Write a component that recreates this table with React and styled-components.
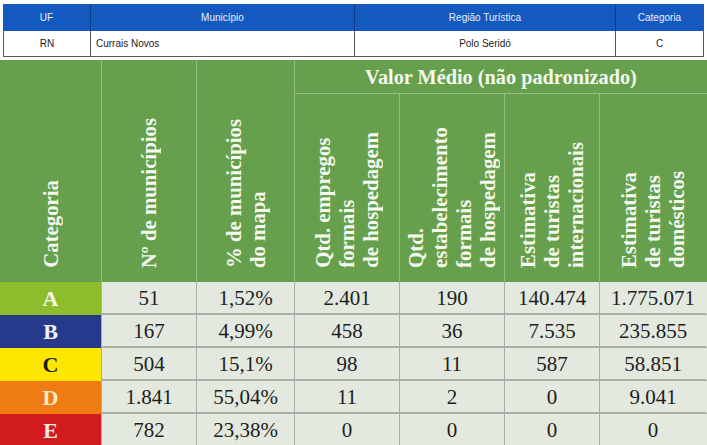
import React from "react";
import styled, { createGlobalStyle } from "styled-components";

const Global = createGlobalStyle`
  html, body { margin: 0; padding: 0; background: #ffffff; }
  body { width: 707px; height: 445px; overflow: hidden; }
`;

const Page = styled.div`
  width: 707px;
  display: flex;
  flex-direction: column;
`;

const InfoTable = styled.div`
  margin: 4px 3px 0 3px;
  display: grid;
  grid-template-columns: 88px 264px 261px 88px;
  grid-template-rows: 27px 26px;
  font-family: "Liberation Sans", Arial, sans-serif;
  font-size: 10px;
`;

const InfoHead = styled.div`
  background: #1459bf;
  color: #e8f0ff;
  display: flex;
  align-items: center;
  justify-content: center;
  border-right: 1px solid ${(p) => (p.$last ? "#1459bf" : "#0c3d85")};
  box-sizing: border-box;
`;

const InfoCell = styled.div`
  background: #ffffff;
  color: #1d1d1d;
  display: flex;
  align-items: center;
  justify-content: ${(p) => (p.$left ? "flex-start" : "center")};
  padding-left: ${(p) => (p.$left ? "5px" : "0")};
  border-bottom: 1px solid #5a5a5a;
  border-right: 1px solid #5a5a5a;
  border-left: ${(p) => (p.$first ? "1px solid #5a5a5a" : "none")};
  box-sizing: border-box;
`;

const DataTable = styled.div`
  margin-top: 3px;
  display: grid;
  grid-template-columns: 102px 95px 98px 105px 105px 95px 107px;
  grid-template-rows: 34px 188px repeat(5, 33px);
  font-family: "Liberation Serif", "Times New Roman", serif;
`;

const GREEN = "#66a04c";
const HLINE = "#93bd83";

const SideHead = styled.div`
  grid-row: 1 / span 2;
  background: ${GREEN};
  border-right: 1px solid ${(p) => (p.$last ? GREEN : HLINE)};
  box-sizing: border-box;
  display: flex;
  align-items: flex-end;
  justify-content: center;
  padding-bottom: 14px;
`;

const GroupHead = styled.div`
  grid-column: 4 / span 4;
  background: ${GREEN};
  border-bottom: 1px solid ${HLINE};
  box-sizing: border-box;
  color: #f4f8ef;
  font-weight: bold;
  font-size: 20.3px;
  display: flex;
  align-items: center;
  justify-content: center;
  padding-top: 1px;
`;

const SubHead = styled.div`
  background: ${GREEN};
  border-right: 1px solid ${(p) => (p.$last ? GREEN : HLINE)};
  box-sizing: border-box;
  display: flex;
  align-items: flex-end;
  justify-content: center;
  padding-bottom: 14px;
`;

const Vertical = styled.span`
  writing-mode: vertical-rl;
  transform: rotate(180deg);
  color: #f4f8ef;
  font-weight: bold;
  font-size: 20.8px;
  line-height: 24px;
  white-space: nowrap;
  text-align: left;
`;

const CatCell = styled.div`
  background: ${(p) => p.$bg};
  color: ${(p) => p.$fg};
  border-right: 1px solid #a9afa6;
  box-sizing: border-box;
  display: flex;
  align-items: center;
  justify-content: center;
  font-weight: bold;
  font-size: 22px;
`;

const ValCell = styled.div`
  background: #e3e9df;
  color: #1e1e1e;
  border-right: 1px solid ${(p) => (p.$last ? "#e3e9df" : "#a9afa6")};
  border-bottom: 2px solid #a9afa6;
  box-sizing: border-box;
  display: flex;
  align-items: center;
  justify-content: center;
  font-size: 21px;
  padding-top: 1px;
`;

const rows = [
  { c: "A", bg: "#8dbd2c", fg: "#f6f9e8", v: ["51", "1,52%", "2.401", "190", "140.474", "1.775.071"] },
  { c: "B", bg: "#263a8c", fg: "#f2f3fa", v: ["167", "4,99%", "458", "36", "7.535", "235.855"] },
  { c: "C", bg: "#ffe600", fg: "#1a1a10", v: ["504", "15,1%", "98", "11", "587", "58.851"] },
  { c: "D", bg: "#ee7c12", fg: "#f9e7c9", v: ["1.841", "55,04%", "11", "2", "0", "9.041"] },
  { c: "E", bg: "#d11b1f", fg: "#fbeaea", v: ["782", "23,38%", "0", "0", "0", "0"] },
];

const VText = ({ lines }) => (
  <Vertical>
    {lines.map((l, i) => (
      <React.Fragment key={i}>
        {i > 0 && <br />}
        {l}
      </React.Fragment>
    ))}
  </Vertical>
);

export default function App() {
  return (
    <Page>
      <Global />
      <InfoTable>
        <InfoHead>UF</InfoHead>
        <InfoHead>Município</InfoHead>
        <InfoHead>Região Turística</InfoHead>
        <InfoHead $last>Categoria</InfoHead>
        <InfoCell $first>RN</InfoCell>
        <InfoCell $left>Currais Novos</InfoCell>
        <InfoCell>Polo Seridó</InfoCell>
        <InfoCell>C</InfoCell>
      </InfoTable>
      <DataTable>
        <SideHead>
          <VText lines={["Categoria"]} />
        </SideHead>
        <SideHead>
          <VText lines={["Nº de municípios"]} />
        </SideHead>
        <SideHead>
          <VText lines={["% de municípios", "do mapa"]} />
        </SideHead>
        <GroupHead>Valor Médio (não padronizado)</GroupHead>
        <SubHead>
          <VText lines={["Qtd. empregos", "formais", "de hospedagem"]} />
        </SubHead>
        <SubHead>
          <VText lines={["Qtd.", "estabelecimento", "formais", "de hospedagem"]} />
        </SubHead>
        <SubHead>
          <VText lines={["Estimativa", "de turistas", "internacionais"]} />
        </SubHead>
        <SubHead $last>
          <VText lines={["Estimativa", "de turistas", "domésticos"]} />
        </SubHead>
        {rows.map((r) => (
          <React.Fragment key={r.c}>
            <CatCell $bg={r.bg} $fg={r.fg}>{r.c}</CatCell>
            {r.v.map((v, i) => (
              <ValCell key={i} $last={i === r.v.length - 1}>{v}</ValCell>
            ))}
          </React.Fragment>
        ))}
      </DataTable>
    </Page>
  );
}
